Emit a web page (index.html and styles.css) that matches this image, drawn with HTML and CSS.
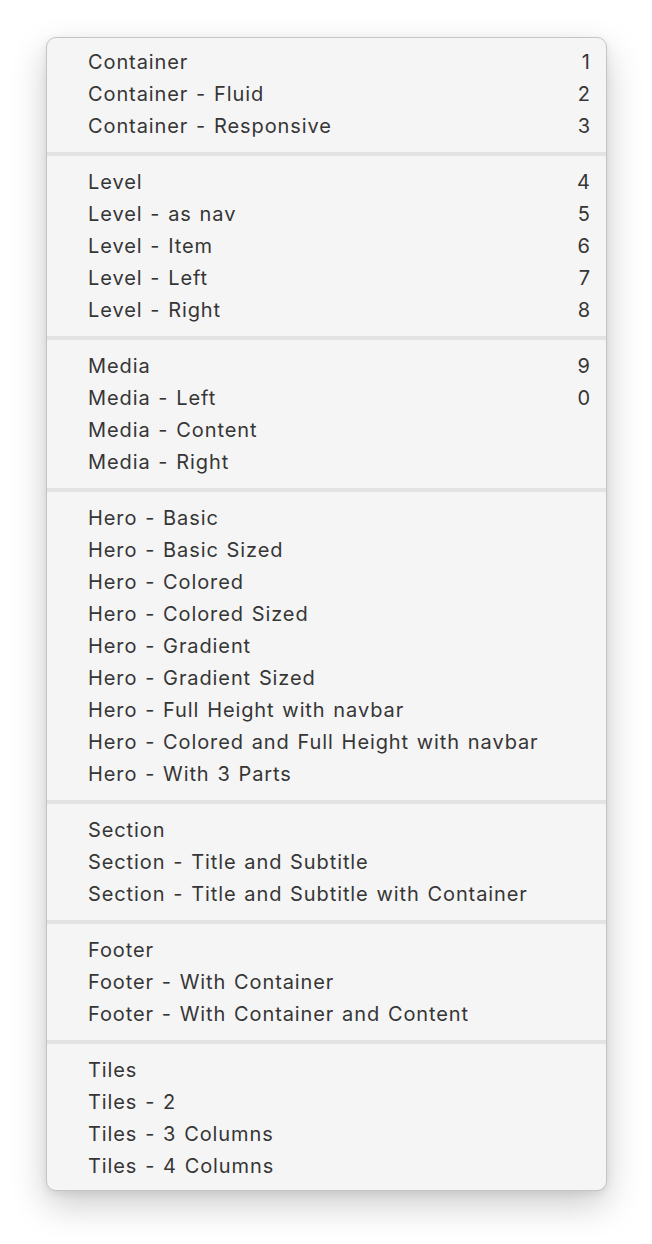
FILE: index.html
```html
<!DOCTYPE html>
<html>
<head>
<meta charset="utf-8">
<link rel="stylesheet" href="styles.css">
</head>
<body>
<div class="menu">
  <div class="group">
    <div class="item"><span>Container</span><span class="key">1</span></div>
    <div class="item"><span>Container - Fluid</span><span class="key">2</span></div>
    <div class="item"><span>Container - Responsive</span><span class="key">3</span></div>
  </div>
  <div class="sep"></div>
  <div class="group">
    <div class="item"><span>Level</span><span class="key">4</span></div>
    <div class="item"><span>Level - as nav</span><span class="key">5</span></div>
    <div class="item"><span>Level - Item</span><span class="key">6</span></div>
    <div class="item"><span>Level - Left</span><span class="key">7</span></div>
    <div class="item"><span>Level - Right</span><span class="key">8</span></div>
  </div>
  <div class="sep"></div>
  <div class="group">
    <div class="item"><span>Media</span><span class="key">9</span></div>
    <div class="item"><span>Media - Left</span><span class="key">0</span></div>
    <div class="item"><span>Media - Content</span></div>
    <div class="item"><span>Media - Right</span></div>
  </div>
  <div class="sep"></div>
  <div class="group">
    <div class="item"><span>Hero - Basic</span></div>
    <div class="item"><span>Hero - Basic Sized</span></div>
    <div class="item"><span>Hero - Colored</span></div>
    <div class="item"><span>Hero - Colored Sized</span></div>
    <div class="item"><span>Hero - Gradient</span></div>
    <div class="item"><span>Hero - Gradient Sized</span></div>
    <div class="item"><span>Hero - Full Height with navbar</span></div>
    <div class="item"><span>Hero - Colored and Full Height with navbar</span></div>
    <div class="item"><span>Hero - With 3 Parts</span></div>
  </div>
  <div class="sep"></div>
  <div class="group">
    <div class="item"><span>Section</span></div>
    <div class="item"><span>Section - Title and Subtitle</span></div>
    <div class="item"><span>Section - Title and Subtitle with Container</span></div>
  </div>
  <div class="sep"></div>
  <div class="group">
    <div class="item"><span>Footer</span></div>
    <div class="item"><span>Footer - With Container</span></div>
    <div class="item"><span>Footer - With Container and Content</span></div>
  </div>
  <div class="sep"></div>
  <div class="group">
    <div class="item"><span>Tiles</span></div>
    <div class="item"><span>Tiles - 2</span></div>
    <div class="item"><span>Tiles - 3 Columns</span></div>
    <div class="item"><span>Tiles - 4 Columns</span></div>
  </div>
</div>
</body>
</html>
```
FILE: styles.css
```css
html, body {
  margin: 0;
  background: #ffffff;
}
body {
  padding: 37px 0 54px 46px;
  font-family: Inter, "Noto Sans", sans-serif;
}
.menu {
  width: 561px;
  box-sizing: border-box;
  background: #f5f5f5;
  border: 1px solid #c4c4c4;
  border-radius: 10px;
  padding: 8px 0;
  box-shadow: 0 14px 36px rgba(0, 0, 0, 0.2), 0 3px 8px rgba(0, 0, 0, 0.08);
}
.item {
  display: flex;
  justify-content: space-between;
  align-items: center;
  height: 32px;
  padding: 0 16px 0 41px;
  font-size: 20px;
  color: #363636;
  letter-spacing: 0.9px;
  word-spacing: 1.3px;
}
.key {
  letter-spacing: 0;
}
.sep {
  height: 4px;
  background: #e3e3e3;
  margin: 10px 0;
}
```
